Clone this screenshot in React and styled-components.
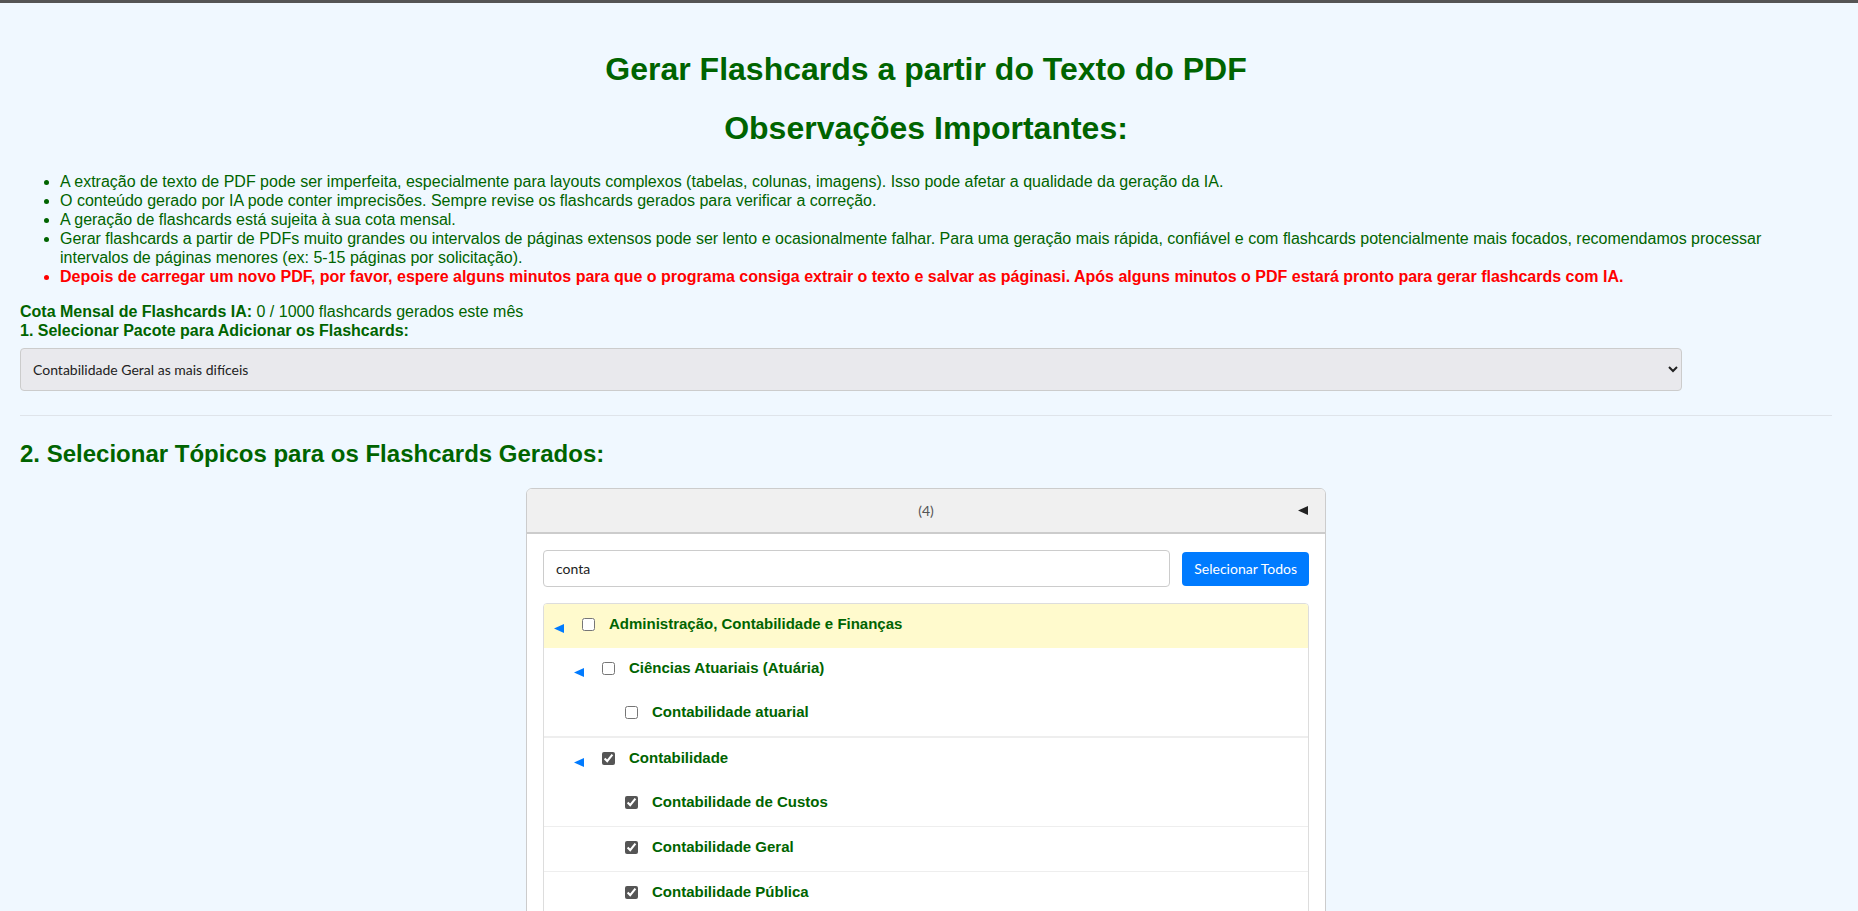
import styled, { createGlobalStyle } from "styled-components";

const green = "#006400";
const controlFont = `"Lato", "Noto Sans", sans-serif`;

const GlobalStyle = createGlobalStyle`
  html, body {
    margin: 0;
  }
  body {
    background-color: #f0f8ff;
    border-top: 3px solid #555;
    font-family: "Liberation Sans", Arial, sans-serif;
    color: ${green};
  }
  * {
    box-sizing: border-box;
  }
`;

const Page = styled.div`
  padding: 0 26px 40px 20px;
`;

const Title = styled.h1`
  margin: 48px 0 22px;
  font-size: 32px;
  line-height: 37px;
  font-weight: bold;
  text-align: center;
`;

const Subtitle = styled(Title)`
  margin: 0 0 25px;
`;

const NoteList = styled.ul`
  margin: 0 0 16px;
  padding-left: 40px;
  font-size: 16px;
  line-height: 19px;
`;

const Note = styled.li`
  color: ${({ $warning }) => ($warning ? "#ff0000" : green)};
  font-weight: ${({ $warning }) => ($warning ? "bold" : "normal")};
`;

const Line = styled.div`
  font-size: 16px;
  line-height: 19px;
`;

const Strong = styled.strong`
  font-weight: bold;
`;

const PackageSelect = styled.select`
  display: block;
  width: calc(100% - 150px);
  height: 43px;
  margin-top: 8px;
  padding: 0 8px;
  border: 1px solid #ccc;
  border-radius: 4px;
  background-color: #e9e9ed;
  color: #222;
  font-family: ${controlFont};
  font-size: 14px;
`;

const Divider = styled.hr`
  margin: 24px 0;
  border: none;
  border-top: 1px solid #dfe4ea;
`;

const SectionTitle = styled.h2`
  margin: 0 0 20px;
  font-size: 24px;
  line-height: 28px;
  font-weight: bold;
`;

const Panel = styled.div`
  width: 800px;
  margin: 0 auto;
  background: #fff;
  border: 1px solid #ccc;
  border-radius: 6px;
  overflow: hidden;
`;

const PanelHeader = styled.div`
  display: grid;
  grid-template-columns: 1fr auto 1fr;
  align-items: center;
  height: 45px;
  padding: 0 17px;
  background: #f0f0f0;
  border-bottom: 2px solid #ccc;
  font-family: ${controlFont};
  font-size: 14px;
  color: #555;
`;

const HeaderToggle = styled.span`
  justify-self: end;
  display: flex;
`;

const PanelBody = styled.div`
  padding: 16px;
`;

const SearchRow = styled.div`
  display: flex;
  align-items: center;
  gap: 12px;
`;

const SearchInput = styled.input`
  flex: 1;
  height: 37px;
  padding: 0 12px;
  border: 1px solid #ccc;
  border-radius: 4px;
  font-family: ${controlFont};
  font-size: 14px;
  color: #222;
`;

const SelectAllButton = styled.button`
  height: 34px;
  padding: 0 12px;
  border: none;
  border-radius: 4px;
  background: #007bff;
  color: #fff;
  font-family: ${controlFont};
  font-size: 14px;
  cursor: pointer;
`;

const TreeList = styled.ul`
  margin: 16px 0 0;
  padding: 0;
  list-style: none;
  border: 1px solid #ddd;
  border-radius: 4px;
  overflow: hidden;
`;

const SubList = styled.ul`
  margin: 0;
  padding: 0;
  list-style: none;
`;

const TreeItem = styled.li`
  border-bottom: 1px solid #eee;
`;

const Row = styled.div`
  display: flex;
  align-items: center;
  height: 44px;
  padding: 10px 10px 14px ${({ $level }) => 10 + $level * 20}px;
  background: ${({ $highlight }) => ($highlight ? "#fffacd" : "transparent")};
`;

const Toggle = styled.span`
  display: flex;
  width: 24px;
  margin-top: 8px;
  cursor: pointer;
`;

const LeafSpacer = styled.span`
  width: 27px;
`;

const Check = styled.input`
  width: 13px;
  height: 13px;
  margin: 0 14px 0 4px;
  accent-color: #555;
`;

const Label = styled.span`
  font-size: 15px;
  line-height: 20px;
  font-weight: bold;
  color: ${green};
`;

const Arrow = ({ color }) => (
  <svg width="10" height="9" viewBox="0 0 10 9">
    <polygon points="10,0 10,9 0,4.5" fill={color} />
  </svg>
);

const topics = [
  {
    name: "Administração, Contabilidade e Finanças",
    checked: false,
    highlight: true,
    children: [
      {
        name: "Ciências Atuariais (Atuária)",
        checked: false,
        children: [{ name: "Contabilidade atuarial", checked: false }],
      },
      {
        name: "Contabilidade",
        checked: true,
        children: [
          { name: "Contabilidade de Custos", checked: true },
          { name: "Contabilidade Geral", checked: true },
          { name: "Contabilidade Pública", checked: true },
        ],
      },
    ],
  },
];

const TopicNode = ({ node, level }) => (
  <TreeItem>
    <Row $level={level} $highlight={node.highlight}>
      {node.children ? (
        <Toggle>
          <Arrow color="#007bff" />
        </Toggle>
      ) : (
        <LeafSpacer />
      )}
      <Check type="checkbox" defaultChecked={node.checked} />
      <Label>{node.name}</Label>
    </Row>
    {node.children && (
      <SubList>
        {node.children.map((child) => (
          <TopicNode key={child.name} node={child} level={level + 1} />
        ))}
      </SubList>
    )}
  </TreeItem>
);

const App = () => {
  return (
    <Page>
      <GlobalStyle />
      <Title>Gerar Flashcards a partir do Texto do PDF</Title>
      <Subtitle>Observações Importantes:</Subtitle>
      <NoteList>
        <Note>
          A extração de texto de PDF pode ser imperfeita, especialmente para layouts complexos
          (tabelas, colunas, imagens). Isso pode afetar a qualidade da geração da IA.
        </Note>
        <Note>
          O conteúdo gerado por IA pode conter imprecisões. Sempre revise os flashcards gerados para
          verificar a correção.
        </Note>
        <Note>A geração de flashcards está sujeita à sua cota mensal.</Note>
        <Note>
          Gerar flashcards a partir de PDFs muito grandes ou intervalos de páginas extensos pode ser
          lento e ocasionalmente falhar. Para uma geração mais rápida, confiável e com flashcards
          potencialmente mais focados, recomendamos processar intervalos de páginas menores (ex:
          5-15 páginas por solicitação).
        </Note>
        <Note $warning>
          Depois de carregar um novo PDF, por favor, espere alguns minutos para que o programa
          consiga extrair o texto e salvar as páginasi. Após alguns minutos o PDF estará pronto para
          gerar flashcards com IA.
        </Note>
      </NoteList>
      <Line>
        <Strong>Cota Mensal de Flashcards IA:</Strong> 0 / 1000 flashcards gerados este mês
      </Line>
      <Line>
        <Strong>1. Selecionar Pacote para Adicionar os Flashcards:</Strong>
      </Line>
      <PackageSelect defaultValue="geral">
        <option value="geral">Contabilidade Geral as mais difíceis</option>
      </PackageSelect>
      <Divider />
      <SectionTitle>2. Selecionar Tópicos para os Flashcards Gerados:</SectionTitle>
      <Panel>
        <PanelHeader>
          <span />
          <span>(4)</span>
          <HeaderToggle>
            <Arrow color="#222" />
          </HeaderToggle>
        </PanelHeader>
        <PanelBody>
          <SearchRow>
            <SearchInput defaultValue="conta" />
            <SelectAllButton>Selecionar Todos</SelectAllButton>
          </SearchRow>
          <TreeList>
            {topics.map((node) => (
              <TopicNode key={node.name} node={node} level={0} />
            ))}
          </TreeList>
        </PanelBody>
      </Panel>
    </Page>
  );
};

export default App;
